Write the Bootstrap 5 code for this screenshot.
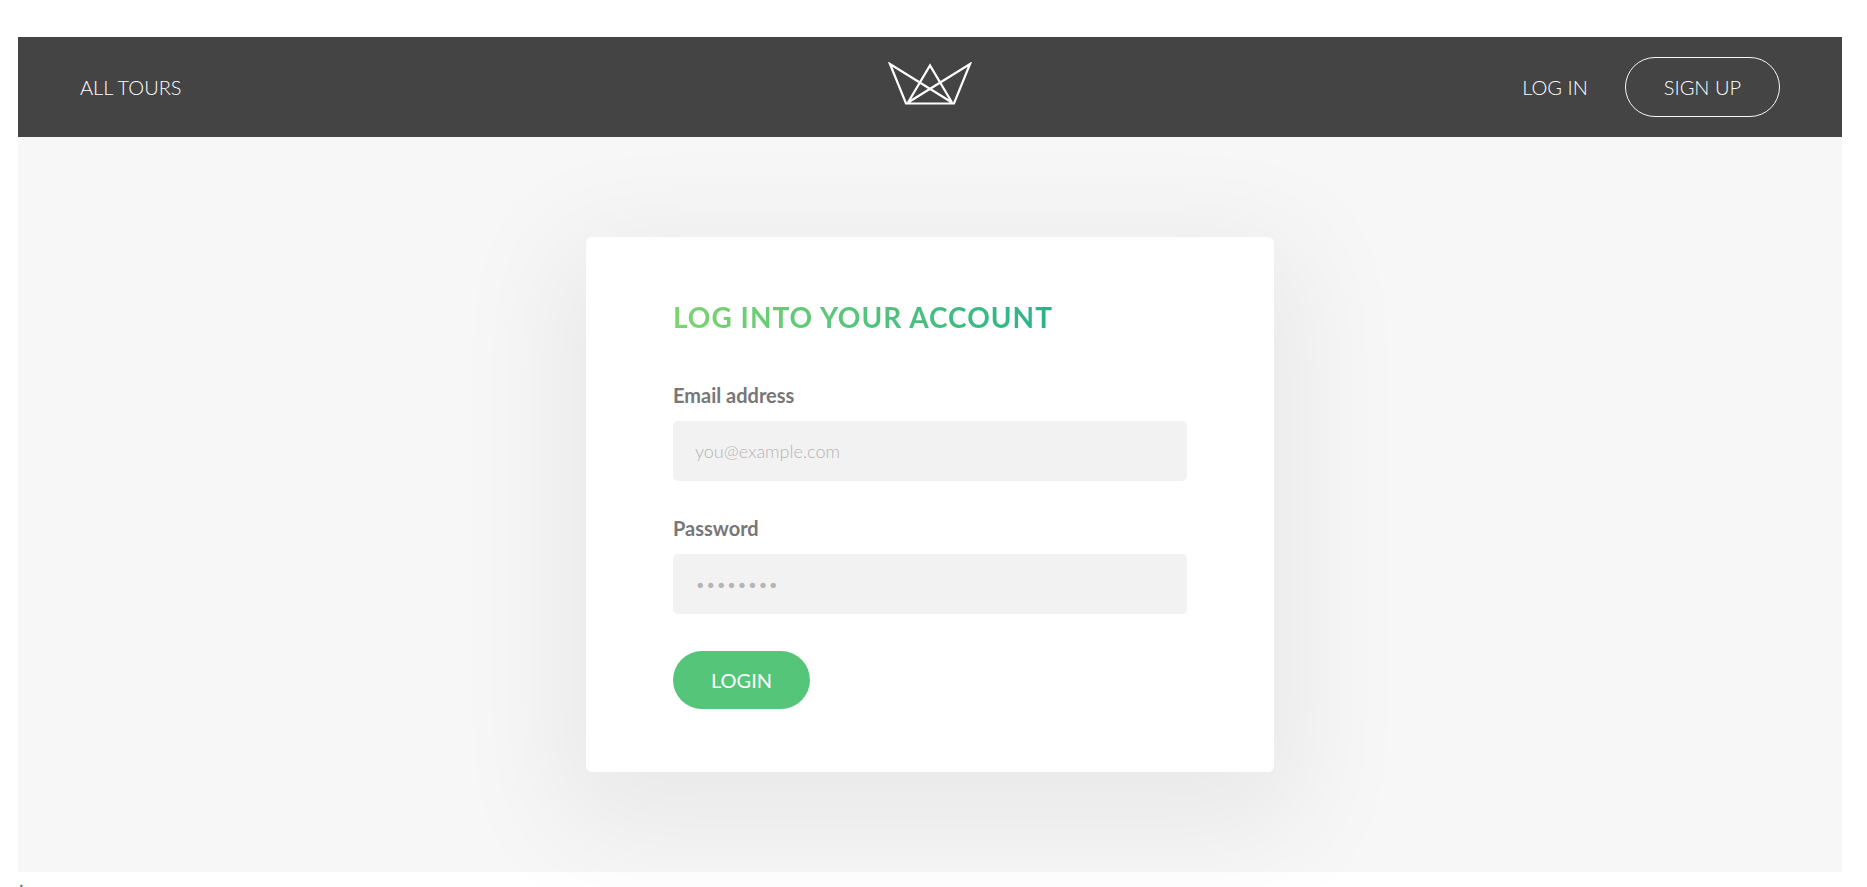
<!DOCTYPE html>
<html lang="en">
<head>
<meta charset="utf-8">
<meta name="viewport" content="width=device-width, initial-scale=1">
<title>Log into your account</title>
<link href="https://cdn.jsdelivr.net/npm/bootstrap@5.3.0/dist/css/bootstrap.min.css" rel="stylesheet">
<style>
  body {
    font-family: Lato, "Open Sans", sans-serif;
    font-size: 20px;
    font-weight: 300;
    line-height: 32px;
    color: #777;
    background: #fff;
    padding: 37px 25px 0 18px;
  }
  .site-header { background: #444; min-height: 100px; padding: 0 62px; }
  .site-header .nav-link { color: #fff; font-weight: 300; padding: 0; }
  .site-header .signup-link {
    border: 1px solid #f7f7f7;
    border-radius: 100px;
    padding: 13px 38px;
  }
  .nav-gap { gap: 37px; }
  .crown { display: block; width: 84px; height: 44px; margin-bottom: 6px; }
  .site-main { background: #f7f7f7; padding: 100px 24px; }
  .login-card {
    max-width: 688px;
    background: #fff;
    border-radius: 6px;
    padding: 62px 87px 63px;
    box-shadow: 0 31px 116px 30px rgba(0, 0, 0, .06);
  }
  .login-title {
    font-size: 28px;
    line-height: 36px;
    font-weight: 700;
    letter-spacing: 1px;
    margin-bottom: 44px;
    color: transparent;
    background: linear-gradient(to right, #7dd56f, #28b487);
    -webkit-background-clip: text;
    background-clip: text;
  }
  .field { margin-bottom: 31px; }
  .field .form-label { display: block; font-weight: 700; line-height: 32px; margin-bottom: 10px; }
  .field .form-control {
    font-size: 18px;
    font-weight: 300;
    line-height: 28px;
    color: #777;
    background: #f2f2f2;
    border: 0;
    border-radius: 5px;
    padding: 16px 22px;
  }
  .field .form-control::placeholder { color: #b4b4b4; }
  .login-btn {
    --bs-btn-color: #fff;
    --bs-btn-bg: #55c57a;
    --bs-btn-hover-color: #fff;
    --bs-btn-hover-bg: #4bb76f;
    font-size: 20px;
    font-weight: 400;
    line-height: 32px;
    border: 0;
    border-radius: 100px;
    padding: 13px 38px;
  }
  .form-actions { padding-top: 6px; }
  .page-end { line-height: 15px; font-weight: 400; padding-left: 1px; }
</style>
</head>
<body>
<header class="site-header d-flex align-items-center">
  <nav class="d-flex flex-fill w-100" aria-label="Tours">
    <a class="nav-link" href="#">ALL TOURS</a>
  </nav>
  <svg class="crown flex-shrink-0" viewBox="0 0 84 44" fill="none" stroke="#fff" stroke-width="2.2" role="img" aria-label="Crown logo">
    <path d="M2 2 18 41.500H66L82 2 20 40.500 42 3.500 64 40.500Z"/>
  </svg>
  <nav class="d-flex flex-fill w-100 justify-content-end align-items-center nav-gap" aria-label="Account">
    <a class="nav-link text-nowrap" href="#">LOG IN</a>
    <a class="nav-link text-nowrap signup-link" href="#">SIGN UP</a>
  </nav>
</header>
<main class="site-main">
  <section class="login-card mx-auto">
    <h2 class="login-title d-table">LOG INTO YOUR ACCOUNT</h2>
    <form>
      <div class="field">
        <label class="form-label" for="email">Email address</label>
        <input class="form-control" id="email" type="email" placeholder="you@example.com">
      </div>
      <div class="field">
        <label class="form-label" for="password">Password</label>
        <input class="form-control" id="password" type="password" placeholder="••••••••">
      </div>
      <div class="form-actions d-flex">
        <button class="btn login-btn" type="button">LOGIN</button>
      </div>
    </form>
  </section>
</main>
<p class="page-end mb-0">.</p>
<script src="https://cdn.jsdelivr.net/npm/bootstrap@5.3.0/dist/js/bootstrap.bundle.min.js"></script>
</body>
</html>
